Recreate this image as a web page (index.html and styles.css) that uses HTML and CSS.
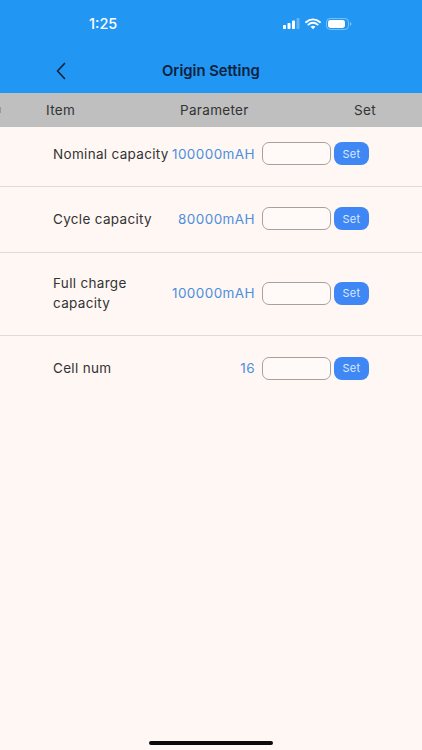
FILE: index.html
```html
<!DOCTYPE html>
<html lang="en">
<head>
<meta charset="utf-8">
<title>Origin Setting</title>
<link rel="stylesheet" href="styles.css">
</head>
<body>
<div class="app">
  <header class="top">
    <div class="status">
      <span class="time">1:25</span>
      <div class="status-icons">
        <svg class="signal" width="17" height="11" viewBox="0 0 17 11"><rect x="0" y="7" width="3" height="4" rx="0.8" fill="#fff"/><rect x="4.5" y="5" width="3" height="6" rx="0.8" fill="#fff"/><rect x="9" y="2.5" width="3" height="8.5" rx="0.8" fill="#fff"/><rect x="13.5" y="0" width="3" height="11" rx="0.8" fill="#fff" opacity="0.3"/></svg>
        <svg class="wifi" width="16" height="12" viewBox="0 0 16 12"><path d="M1 4.2C5 0.4 11 0.4 15 4.2M3.4 6.6C6 4.2 10 4.2 12.6 6.6" fill="none" stroke="#fff" stroke-width="1.9" stroke-linecap="round"/><path d="M5.6 8.7C7 7.5 9 7.5 10.4 8.7L8 11.3Z" fill="#fff"/></svg>
        <svg class="battery" width="26" height="12" viewBox="0 0 26 12"><rect x="0.5" y="0.5" width="22" height="11" rx="3.6" fill="none" stroke="#fff" stroke-opacity="0.4"/><rect x="2" y="2" width="17" height="8" rx="2.4" fill="#fff"/><path d="M24 4.2C24.9 4.5 25.4 5.2 25.4 6C25.4 6.8 24.9 7.5 24 7.8Z" fill="#fff" fill-opacity="0.45"/></svg>
      </div>
    </div>
    <div class="nav">
      <svg class="back" width="12" height="18" viewBox="0 0 12 18"><path d="M9.5 1.5L2.5 9L9.5 16.5" fill="none" stroke="#14263f" stroke-width="1.7" stroke-linecap="round" stroke-linejoin="round"/></svg>
      <h1 class="title">Origin Setting</h1>
    </div>
  </header>
  <div class="thead">
    <span class="tick"></span>
    <span class="th-item">Item</span>
    <span class="th-param">Parameter</span>
    <span class="th-set">Set</span>
  </div>
  <main class="rows">
    <div class="row row-a">
      <span class="label">Nominal capacity</span>
      <span class="value">100000mAH</span>
      <span class="field"></span>
      <button class="set" type="button">Set</button>
    </div>
    <div class="row row-b">
      <span class="label">Cycle capacity</span>
      <span class="value">80000mAH</span>
      <span class="field"></span>
      <button class="set" type="button">Set</button>
    </div>
    <div class="row row-c">
      <span class="label">Full charge capacity</span>
      <span class="value">100000mAH</span>
      <span class="field"></span>
      <button class="set" type="button">Set</button>
    </div>
    <div class="row row-d">
      <span class="label">Cell num</span>
      <span class="value">16</span>
      <span class="field"></span>
      <button class="set" type="button">Set</button>
    </div>
  </main>
  <div class="home-bar"></div>
</div>
</body>
</html>
```
FILE: styles.css
```css
* { box-sizing: border-box; }
html, body { margin: 0; padding: 0; }
body { font-family: Inter, "Liberation Sans", sans-serif; background: #fff7f4; }
.app { width: 422px; height: 750px; display: flex; flex-direction: column; background: #fff7f4; overflow: hidden; }
.top { height: 93px; background: #2196f3; display: flex; flex-direction: column; flex: none; }
.status { height: 47px; display: flex; align-items: center; padding-left: 89px; }
.time { width: 187px; color: #fff; font-size: 14.5px; font-weight: 500; line-height: 18px; }
.status-icons { display: flex; align-items: center; gap: 5px; }
.signal { margin-left: 7px; }
.nav { flex: 1; display: flex; align-items: center; padding: 1px 0 0 55px; }
.back { flex: none; }
.title { margin: 0 0 0 95px; font-size: 14.8px; font-weight: 600; color: #0e2240; line-height: 18px; }
.thead { height: 34px; flex: none; background: #bfbfbf; display: flex; align-items: center; font-size: 13.5px; color: #333; letter-spacing: 0.32px; }
.tick { width: 1px; height: 6px; flex: none; background: #999; }
.th-item { width: 179px; padding-left: 45px; }
.th-param { width: 174px; }
.rows { display: flex; flex-direction: column; }
.row { display: flex; align-items: center; padding: 0 0 2px 53px; border-bottom: 1px solid #e3d8d5; }
.row-a { height: 60px; padding-bottom: 6px; }
.row-b { height: 66px; }
.row-c { height: 83px; }
.row-d { height: 66px; border-bottom: 0; }
.label { width: 118px; flex: none; font-size: 13.5px; line-height: 20px; color: #333; letter-spacing: 0.32px; }
.value { width: 84px; flex: none; text-align: right; font-size: 13.5px; color: #4d8fdc; letter-spacing: 0.42px; white-space: nowrap; }
.field { width: 69px; height: 23px; flex: none; margin-left: 7px; border: 1.3px solid #a8a09c; border-radius: 7px; background: #fff9f7; }
.set { width: 35px; height: 23px; flex: none; margin-left: 3px; padding: 0; border: 0; border-radius: 8px; background: #3f87f5; color: #dbe9ff; font-family: inherit; font-size: 11px; letter-spacing: 0.3px; }
.home-bar { width: 124px; height: 4px; border-radius: 2px; background: #0b0b0b; margin: auto 0 5px 149px; flex: none; }
```
